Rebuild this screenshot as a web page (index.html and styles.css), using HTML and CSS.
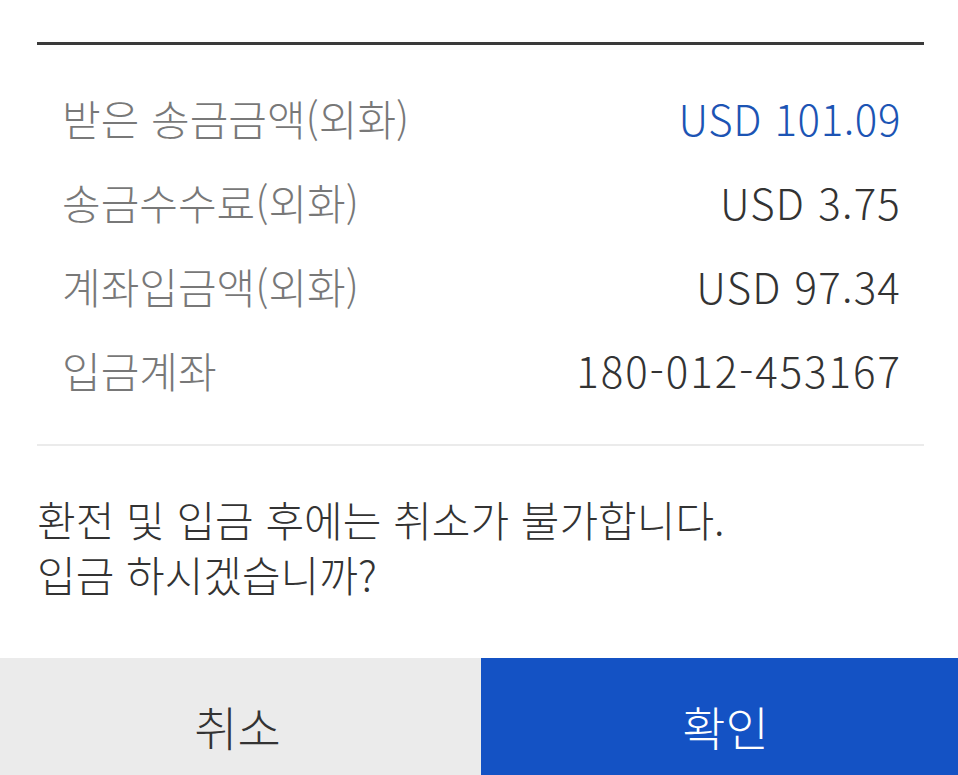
FILE: index.html
```html
<!DOCTYPE html>
<html lang="ko">

<head>
    <meta charset="utf-8" />
    <title>입금 확인</title>
    <link rel="stylesheet" href="styles.css">
</head>

<body>
    <div class="dialog">
        <div class="content-block">
            <div class="top-line"></div>
            <div class="info-list">
                <div class="info-row">
                    <span class="info-label">받은 송금금액(외화)</span>
                    <span class="info-value accent-value">USD 101.09</span>
                </div>
                <div class="info-row">
                    <span class="info-label">송금수수료(외화)</span>
                    <span class="info-value">USD 3.75</span>
                </div>
                <div class="info-row">
                    <span class="info-label">계좌입금액(외화)</span>
                    <span class="info-value">USD 97.34</span>
                </div>
                <div class="info-row">
                    <span class="info-label">입금계좌</span>
                    <span class="info-value account-value">180-012-453167</span>
                </div>
            </div>
            <div class="divider"></div>
            <p class="message">환전 및 입금 후에는 취소가 불가합니다.<br />입금 하시겠습니까?</p>
        </div>
        <div class="button-bar">
            <button type="button" class="dialog-button cancel-button">취소</button>
            <button type="button" class="dialog-button confirm-button">확인</button>
        </div>
    </div>
</body>

</html>
```
FILE: styles.css
```css
html,
body {
    margin: 0;
    padding: 0;
    background-color: #ffffff;
}

body {
    font-family: "Noto Sans CJK KR", "Noto Sans", sans-serif;
    font-weight: 300;
    color: #333333;
}

.dialog {
    width: 958px;
    height: 775px;
    display: flex;
    flex-direction: column;
}

.content-block {
    flex: 1;
    padding: 42px 34px 0 37px;
}

.top-line {
    height: 3px;
    background-color: #3a3a3a;
}

.info-list {
    padding: 30px 24px 33px 25px;
}

.info-row {
    display: flex;
    justify-content: space-between;
    align-items: center;
    height: 84px;
    font-size: 42px;
}

.info-label {
    color: #787878;
}

.info-value {
    color: #333333;
    letter-spacing: 1.2px;
    margin-right: -1px;
}

.accent-value {
    color: #1c54b4;
    letter-spacing: 0.6px;
}

.account-value {
    letter-spacing: 2px;
    margin-right: -2px;
}

.divider {
    height: 2px;
    background-color: #ebebeb;
}

.message {
    margin: 45px 0 0;
    font-size: 42px;
    line-height: 55px;
    color: #333333;
}

.button-bar {
    display: flex;
    height: 117px;
}

.dialog-button {
    flex: 1;
    border: none;
    margin: 0;
    padding: 18px 0 0;
    font-family: inherit;
    font-weight: 300;
    font-size: 47px;
}

.cancel-button {
    flex: 0 0 481px;
    padding-right: 6px;
    background-color: #ebebeb;
    color: #333333;
}

.confirm-button {
    padding-left: 12px;
    background-color: #1452c4;
    color: #ffffff;
}
```
